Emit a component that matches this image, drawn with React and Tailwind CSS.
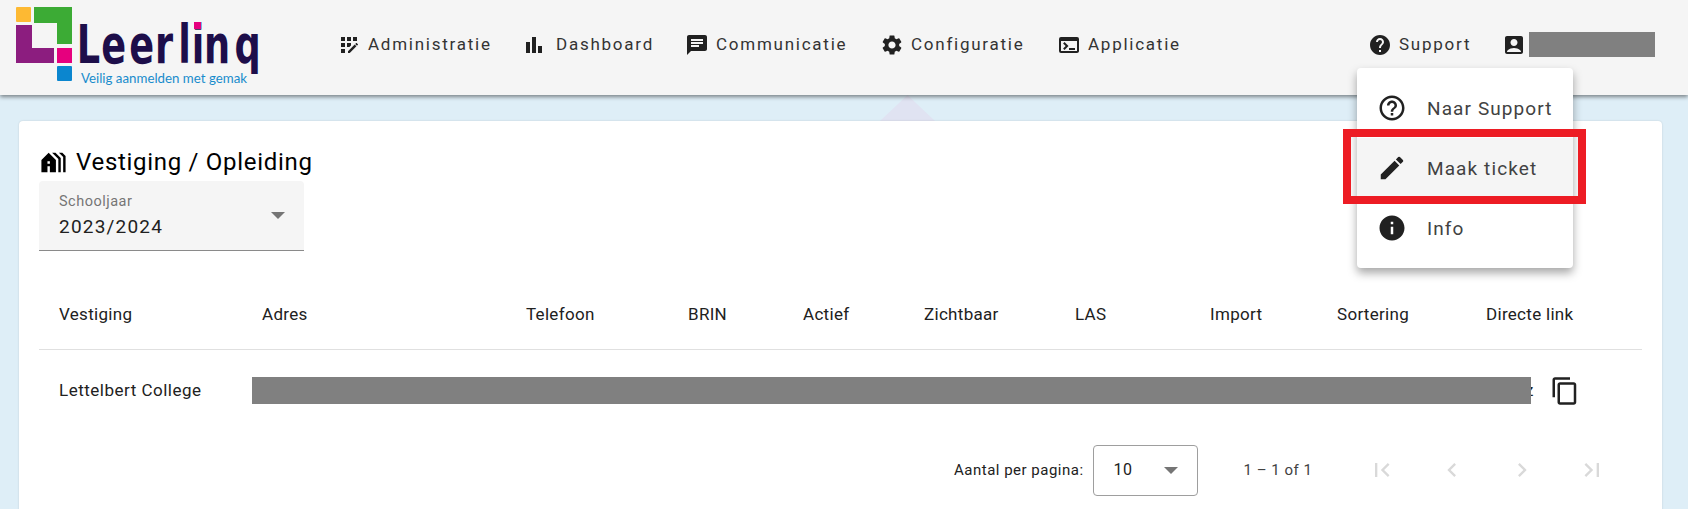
import {
  MdAppRegistration,
  MdBarChart,
  MdChat,
  MdSettings,
  MdTerminal,
  MdHelp,
  MdAccountBox,
  MdHelpOutline,
  MdEdit,
  MdInfo,
  MdOutlineContentCopy,
  MdFirstPage,
  MdChevronLeft,
  MdChevronRight,
  MdLastPage,
  MdHolidayVillage,
} from "react-icons/md";

const navItems = [
  { label: "Administratie", icon: MdAppRegistration, width: "w-[188px]", iconClass: "" },
  { label: "Dashboard", icon: MdBarChart, width: "w-[160px]", iconClass: "-ml-[3px] mr-[3px]" },
  { label: "Communicatie", icon: MdChat, width: "w-[195px]", iconClass: "" },
  { label: "Configuratie", icon: MdSettings, width: "w-[177px]", iconClass: "" },
  { label: "Applicatie", icon: MdTerminal, width: "w-[130px]", iconClass: "" },
];

const columns = [
  { label: "Vestiging", width: "w-[203px]" },
  { label: "Adres", width: "w-[264px]" },
  { label: "Telefoon", width: "w-[162px]" },
  { label: "BRIN", width: "w-[115px]" },
  { label: "Actief", width: "w-[121px]" },
  { label: "Zichtbaar", width: "w-[151px]" },
  { label: "LAS", width: "w-[135px]" },
  { label: "Import", width: "w-[127px]" },
  { label: "Sortering", width: "w-[149px]" },
  { label: "Directe link", width: "w-[136px]" },
];

const Caret = () => (
  <span className="h-0 w-0 border-x-[7px] border-t-[7px] border-x-transparent border-t-[#757575]" />
);

const Logo = () => (
  <svg width="270" height="90" viewBox="0 0 270 90" className="shrink-0">
    <rect x="16" y="7" width="15" height="15" rx="1" fill="#fdb933" />
    <path d="M34 7H72V44H57V23H34Z" fill="#3cab35" />
    <path d="M16 25H32V48H54V63H16Z" fill="#8c1d7f" />
    <rect x="57" y="48" width="15" height="15" fill="#e6007e" />
    <rect x="57" y="66" width="15" height="15" rx="1" fill="#0b86cf" />
    <text
      transform="scale(0.68 1)"
      x="113 149 190 228 262 282 300 345"
      y="63"
      fontFamily="'DejaVu Sans', sans-serif"
      fontWeight="700"
      fontSize="54"
      fill="#1d0e4a"
    >
      Leerlinq
    </text>
    <rect x="194" y="22" width="7" height="7" fill="#e6007e" />
    <text
      x="81"
      y="83"
      textLength="166"
      lengthAdjust="spacingAndGlyphs"
      fontFamily="Lato, sans-serif"
      fontSize="12.5"
      fill="#1a8ccc"
    >
      Veilig aanmelden met gemak
    </text>
  </svg>
);

const App = () => {
  return (
    <div className="relative h-[509px] overflow-hidden bg-[#deeef7] font-['Roboto',sans-serif] text-[#212121]">
      <header className="relative z-10 flex h-[95px] items-center bg-[#f5f5f5] pb-[6px] shadow-[0_2px_4px_rgba(0,0,0,0.45)]">
        <Logo />
        <nav className="ml-[67px] flex h-[24px] items-center text-[17px] tracking-[1.75px] text-[#333333]">
          {navItems.map(({ label, icon: Icon, width, iconClass }) => (
            <div key={label} className={`flex items-center gap-[7px] ${width}`}>
              <Icon className={`text-[24px] text-[#212121] ${iconClass}`} />
              <span>{label}</span>
            </div>
          ))}
        </nav>
        <div className="ml-[181px] flex items-center gap-[7px] text-[17px] tracking-[1.75px] text-[#333333]">
          <MdHelp className="text-[24px] text-[#212121]" />
          <span>Support</span>
        </div>
        <MdAccountBox className="ml-[31px] text-[24px] text-[#212121]" />
        <div className="ml-[3px] h-[25px] w-[126px] bg-[#808080]" />
      </header>

      <main className="relative pl-[19px] pr-[26px] pt-[26px]">
        <div className="absolute left-[880px] top-0 h-[26px] w-[55px] bg-[#e0e3f2] [clip-path:polygon(50%_0,100%_100%,0_100%)]" />
        <section className="relative h-[420px] rounded-[4px] bg-white px-[20px] pt-[28px] shadow-[0_0_2px_rgba(0,0,0,0.15)]">
          <div className="flex h-[26px] items-center gap-[8px] text-[24px] tracking-[0.7px] text-black">
            <MdHolidayVillage className="text-[29px]" />
            <h1>Vestiging / Opleiding</h1>
          </div>
          <div className="mt-[6px] flex h-[70px] w-[265px] items-center justify-between rounded-t-[4px] border-b border-[#8a8a8a] bg-[#f5f5f5] pl-[20px] pr-[19px]">
            <div>
              <div className="text-[14.5px] leading-[16px] tracking-[0.5px] text-[#757575]">Schooljaar</div>
              <div className="mt-[6px] text-[19px] leading-[22px] tracking-[1.2px]">2023/2024</div>
            </div>
            <Caret />
          </div>

          <div className="mt-[29px] flex h-[70px] items-center border-b border-[#e0e0e0] pl-[20px] text-[17px] tracking-[0.3px]">
            {columns.map(({ label, width }) => (
              <div key={label} className={width}>
                {label}
              </div>
            ))}
          </div>

          <div className="flex h-[81px] items-center pl-[20px] text-[17px] tracking-[0.5px]">
            <div className="w-[193px] whitespace-nowrap">Lettelbert College</div>
            <div className="h-[27px] w-[1279px] bg-[#808080]" />
            <div className="flex w-[3px] justify-end overflow-hidden">z</div>
            <MdOutlineContentCopy className="ml-[16px] text-[30px] text-[#212121]" />
          </div>

          <div className="mt-[13px] flex h-[52px] items-center pl-[915px] text-[15px] tracking-[0.5px]">
            <span className="whitespace-nowrap">Aantal per pagina:</span>
            <div className="ml-[9px] flex h-[51px] w-[105px] shrink-0 items-center justify-between rounded-[4px] border border-[#9e9e9e] pl-[20px] pr-[19px] text-[16px]">
              <span>10</span>
              <Caret />
            </div>
            <span className="ml-[46px] w-[68px] whitespace-nowrap text-[#424242]">1 – 1 of 1</span>
            <div className="ml-[56px] flex items-center gap-[42px] text-[28px] text-[#d9d9d9]">
              <MdFirstPage />
              <MdChevronLeft />
              <MdChevronRight />
              <MdLastPage />
            </div>
          </div>
        </section>
      </main>

      <div className="absolute left-[1357px] top-[68px] z-20 w-[216px] rounded-[4px] bg-white py-[10px] text-[19px] tracking-[1.1px] text-[#424242] shadow-[0_5px_10px_rgba(0,0,0,0.35)]">
        <div className="flex h-[60px] items-center gap-[20px] px-[20px]">
          <MdHelpOutline className="text-[30px] text-[#212121]" />
          <span className="whitespace-nowrap pt-[2px]">Naar Support</span>
        </div>
        <div className="flex h-[60px] items-center gap-[20px] bg-[#f5f5f5] px-[20px]">
          <MdEdit className="text-[30px] text-[#212121]" />
          <span className="pt-[2px]">Maak ticket</span>
        </div>
        <div className="flex h-[60px] items-center gap-[20px] px-[20px]">
          <MdInfo className="text-[30px] text-[#212121]" />
          <span className="pt-[2px]">Info</span>
        </div>
      </div>
      <div className="absolute left-[1343px] top-[129px] z-30 h-[75px] w-[243px] border-[8px] border-[#ed1c24]" />
    </div>
  );
};

export default App;
